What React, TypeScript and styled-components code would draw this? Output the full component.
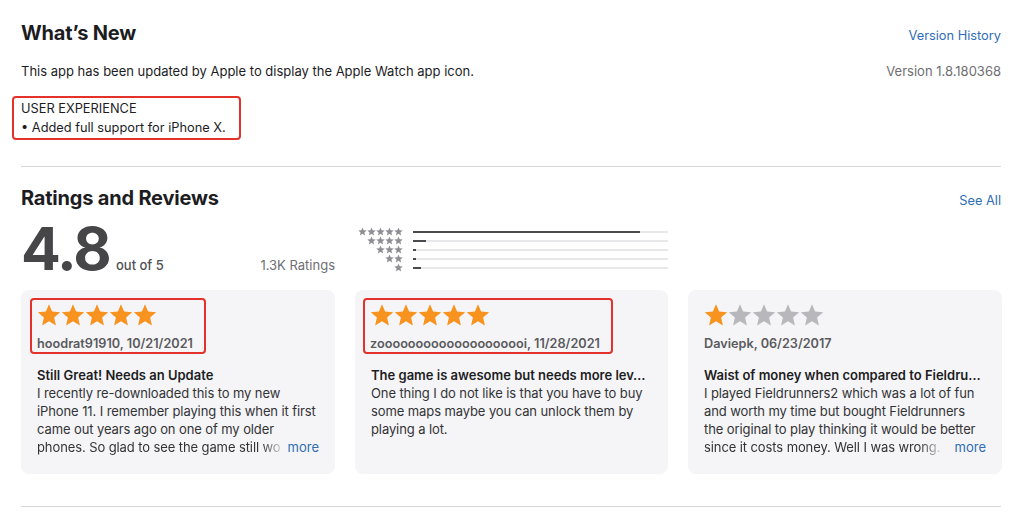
import React from "react";
import styled, { createGlobalStyle } from "styled-components";

const Global = createGlobalStyle`
  html, body { margin: 0; padding: 0; background: #fff; }
  body { font-family: Inter, "Helvetica Neue", Arial, sans-serif; color: #1d1d1f; -webkit-font-smoothing: antialiased; }
`;

const Page = styled.div`
  width: 1020px;
  padding: 16px 19px 0 21px;
  box-sizing: border-box;
`;

const HeaderRow = styled.div<{ $top?: number }>`
  display: flex;
  justify-content: space-between;
  align-items: baseline;
  margin-top: ${(p) => p.$top || 0}px;
`;

const H2 = styled.h2`
  margin: 0;
  font-size: 20px;
  line-height: 34px;
  font-weight: 700;
  letter-spacing: -0.2px;
  color: #1d1d1f;
`;

const Link = styled.a`
  font-size: 12.8px;
  color: #2f6db6;
  text-decoration: none;
`;

const InfoRow = styled.div`
  display: flex;
  justify-content: space-between;
  margin-top: 12px;
  font-size: 13px;
  line-height: 18px;
  color: #1d1d1f;
`;

const Muted = styled.span`
  color: #6e6e73;
`;

const Highlight = styled.div<{ $on?: boolean; $pad: string; $shift?: number }>`
  display: inline-block;
  border: 2px solid ${(p) => (p.$on === false ? "transparent" : "#e3322b")};
  border-radius: 4px;
  padding: ${(p) => p.$pad};
  margin-left: ${(p) => p.$shift || 0}px;
`;

const Notes = styled.div`
  margin-top: 16px;
  font-size: 12.8px;
  line-height: 19px;
  color: #1d1d1f;
`;

const Divider = styled.hr<{ $top: number }>`
  border: none;
  border-top: 1px solid #d6d6d6;
  margin: ${(p) => p.$top}px 0 0 0;
`;

const Grid = styled.div<{ $top: number }>`
  display: grid;
  grid-template-columns: 314px 313px 314px;
  column-gap: 20px;
  margin-top: ${(p) => p.$top}px;
`;

const Score = styled.div`
  display: flex;
  align-items: baseline;
`;

const BigNum = styled.span`
  font-size: 59px;
  line-height: 58px;
  font-weight: 700;
  letter-spacing: -1.8px;
  color: #464648;
`;

const OutOf = styled.span`
  margin-left: 6px;
  font-size: 13px;
  font-weight: 500;
  color: #515154;
`;

const Count = styled.span`
  margin-left: auto;
  font-size: 13px;
  color: #6e6e73;
`;

const Histogram = styled.div`
  display: flex;
  flex-direction: column;
  padding-top: 7px;
`;

const HistRow = styled.div`
  display: flex;
  align-items: center;
  height: 9px;
`;

const HistStars = styled.div`
  width: 48px;
  display: flex;
  justify-content: flex-end;
`;

const Track = styled.div`
  margin-left: 10px;
  flex: 1;
  height: 2px;
  background: #e8e8ea;
`;

const Fill = styled.div`
  height: 100%;
  background: #4a4a4c;
`;

const Card = styled.div`
  background: #f5f5f7;
  border-radius: 8px;
  padding: 8px 16px 0 16px;
  height: 184px;
  box-sizing: border-box;
  font-size: 13px;
  line-height: 18px;
`;

const StarsRow = styled.div`
  display: flex;
  height: 24px;
`;

const Author = styled.div`
  margin-top: 9px;
  font-weight: 600;
  font-size: 12.7px;
  line-height: 16px;
  color: #5a5a5e;
  white-space: nowrap;
`;

const ReviewTitle = styled.div`
  margin-top: 12px;
  font-weight: 600;
  color: #1d1d1f;
  white-space: nowrap;
  overflow: hidden;
`;

const Body = styled.div`
  color: #333336;
  letter-spacing: -0.1px;
`;

const Line = styled.div`
  white-space: nowrap;
  overflow: hidden;
`;

const LastLine = styled.div`
  display: flex;
  white-space: nowrap;
`;

const FadeText = styled.span`
  flex: 0 1 auto;
  min-width: 0;
  overflow: hidden;
  -webkit-mask-image: linear-gradient(to right, #000 calc(100% - 20px), rgba(0, 0, 0, 0.2));
  mask-image: linear-gradient(to right, #000 calc(100% - 20px), rgba(0, 0, 0, 0.2));
`;

const More = styled.span`
  flex: none;
  margin-left: auto;
  padding-left: 4px;
  color: #2f6db6;
  letter-spacing: 0;
`;

const Star = ({ size, color }: { size: number; color: string }) => (
  <svg width={size} height={size} viewBox="0 0 24 24">
    <polygon
      points="12,1.2 15.1,8.6 23.2,9.3 17.1,14.6 18.9,22.5 12,18.3 5.1,22.5 6.9,14.6 0.8,9.3 8.9,8.6"
      fill={color}
    />
  </svg>
);

const ORANGE = "#f7931e";
const GRAY = "#b8b8bc";

const Stars = ({ n }: { n: number }) => (
  <StarsRow>
    {[0, 1, 2, 3, 4].map((i) => (
      <Star key={i} size={24} color={i < n ? ORANGE : GRAY} />
    ))}
  </StarsRow>
);

type Review = {
  stars: number;
  author: string;
  title: string;
  lines: string[];
  more: boolean;
  boxed: boolean;
  shift: number;
};

const reviews: Review[] = [
  {
    stars: 5,
    author: "hoodrat91910, 10/21/2021",
    title: "Still Great! Needs an Update",
    lines: [
      "I recently re-downloaded this to my new",
      "iPhone 11. I remember playing this when it first",
      "came out years ago on one of my older",
      "phones. So glad to see the game still wo",
    ],
    more: true,
    boxed: true,
    shift: -7,
  },
  {
    stars: 5,
    author: "zoooooooooooooooooooi, 11/28/2021",
    title: "The game is awesome but needs more lev…",
    lines: [
      "One thing I do not like is that you have to buy",
      "some maps maybe you can unlock them by",
      "playing a lot.",
    ],
    more: false,
    boxed: true,
    shift: -8,
  },
  {
    stars: 1,
    author: "Daviepk, 06/23/2017",
    title: "Waist of money when compared to Fieldru…",
    lines: [
      "I played Fieldrunners2 which was a lot of fun",
      "and worth my time but bought Fieldrunners",
      "the original to play thinking it would be better",
      "since it costs money. Well I was wrong.",
    ],
    more: true,
    boxed: false,
    shift: -7,
  },
];

const dist = [89, 5, 1, 1, 3];

function ReviewBody({ lines, more }: { lines: string[]; more: boolean }) {
  const head = more ? lines.slice(0, -1) : lines;
  const last = lines[lines.length - 1];
  return (
    <Body>
      {head.map((l, j) => (
        <Line key={j}>{l}</Line>
      ))}
      {more && (
        <LastLine>
          <FadeText>{last}</FadeText>
          <More>more</More>
        </LastLine>
      )}
    </Body>
  );
}

export default function App() {
  return (
    <Page>
      <Global />
      <HeaderRow>
        <H2>What’s New</H2>
        <Link>Version History</Link>
      </HeaderRow>
      <InfoRow>
        <span>This app has been updated by Apple to display the Apple Watch app icon.</span>
        <Muted>Version 1.8.180368</Muted>
      </InfoRow>
      <Notes>
        <Highlight $pad="1px 13px 1px 7px" $shift={-9}>
          USER EXPERIENCE
          <br />• Added full support for iPhone X.
        </Highlight>
      </Notes>
      <Divider $top={26} />
      <HeaderRow $top={14}>
        <H2>Ratings and Reviews</H2>
        <Link>See All</Link>
      </HeaderRow>
      <Grid $top={5}>
        <Score>
          <BigNum>4.8</BigNum>
          <OutOf>out of 5</OutOf>
          <Count>1.3K Ratings</Count>
        </Score>
        <Histogram>
          {dist.map((pct, r) => (
            <HistRow key={r}>
              <HistStars>
                {Array.from({ length: 5 - r }).map((_, i) => (
                  <Star key={i} size={9} color="#8e8e93" />
                ))}
              </HistStars>
              <Track>
                <Fill style={{ width: `${pct}%` }} />
              </Track>
            </HistRow>
          ))}
        </Histogram>
      </Grid>
      <Grid $top={12}>
        {reviews.map((rv, i) => (
          <Card key={i}>
            <Highlight $on={rv.boxed} $pad="3px 11px 0 5px" $shift={rv.shift}>
              <Stars n={rv.stars} />
              <Author>{rv.author}</Author>
            </Highlight>
            <ReviewTitle>{rv.title}</ReviewTitle>
            <ReviewBody lines={rv.lines} more={rv.more} />
          </Card>
        ))}
      </Grid>
      <Divider $top={32} />
    </Page>
  );
}
